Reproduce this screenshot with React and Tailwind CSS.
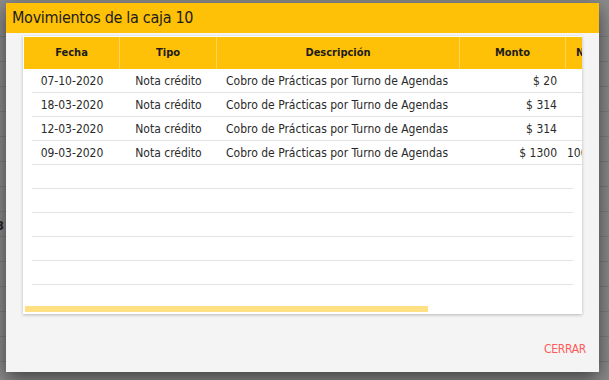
import React from 'react';

const ROWS = [
  { fecha: '07-10-2020', tipo: 'Nota crédito', desc: 'Cobro de Prácticas por Turno de Agendas', monto: '$ 20', nro: '' },
  { fecha: '18-03-2020', tipo: 'Nota crédito', desc: 'Cobro de Prácticas por Turno de Agendas', monto: '$ 314', nro: '' },
  { fecha: '12-03-2020', tipo: 'Nota crédito', desc: 'Cobro de Prácticas por Turno de Agendas', monto: '$ 314', nro: '' },
  { fecha: '09-03-2020', tipo: 'Nota crédito', desc: 'Cobro de Prácticas por Turno de Agendas', monto: '$ 1300', nro: '1000' },
];

const font = { fontFamily: '"DejaVu Sans Condensed", "DejaVu Sans", sans-serif' };

export default function App() {
  return (
    <div className="relative w-[609px] h-[380px] overflow-hidden bg-[#8b8b8b]" style={font}>
      {/* dimmed page behind the dialog */}
      <div className="absolute inset-0 flex flex-col pt-[12px]">
        {Array.from({ length: 15 }).map((_, i) => (
          <div key={i} className="h-[25px] shrink-0 border-b border-[#7d7d7d]" />
        ))}
      </div>
      <span className="absolute left-[-4px] top-[216px] text-[13px] font-bold text-[#2a2a2a]">3</span>

      {/* dialog */}
      <div className="absolute left-[6px] top-[3px] w-[593px] h-[369px] bg-[#f4f4f4] shadow-[0_6px_18px_rgba(0,0,0,0.55)] flex flex-col">
        <div className="h-[30px] shrink-0 bg-[#ffc107] flex items-center px-[6px] text-[16px] tracking-[-0.3px] text-[#1c1c1c]">
          Movimientos de la caja 10
        </div>

        <div className="px-[17px] pt-[3px]">
          <div className="relative h-[278px] bg-white shadow-[0_1px_3px_rgba(0,0,0,0.25)] overflow-hidden flex flex-col">
            {/* header */}
            <div className="mt-[1px] ml-[1px] h-[32px] shrink-0 flex bg-[#ffc107] text-[11px] font-bold text-[#1c1c1c]">
              <div className="w-[96px] shrink-0 flex items-center justify-center border-r border-[#ffd45a]">Fecha</div>
              <div className="w-[97px] shrink-0 flex items-center justify-center border-r border-[#ffd45a]">Tipo</div>
              <div className="w-[243px] shrink-0 flex items-center justify-center border-r border-[#ffd45a]">Descripción</div>
              <div className="w-[106px] shrink-0 flex items-center justify-center border-r border-[#ffd45a]">Monto</div>
              <div className="w-[100px] shrink-0 flex items-center pl-[10px] whitespace-nowrap">Nro. Comprobante</div>
            </div>

            {/* rows */}
            <div className="flex flex-col text-[12px] text-[#2a2a2a]">
              {ROWS.map((r) => (
                <div key={r.fecha} className="ml-[9px] h-[24px] flex items-center border-b-[1.5px] border-[#e2e2e2]">
                  <div className="w-[88px] shrink-0 pr-[8px] text-center">{r.fecha}</div>
                  <div className="w-[97px] shrink-0 text-center">{r.tipo}</div>
                  <div className="w-[243px] shrink-0 pl-[9px] whitespace-nowrap">{r.desc}</div>
                  <div className="w-[106px] shrink-0 pr-[9px] text-right">{r.monto}</div>
                  <div className="w-[60px] shrink-0 pl-[1px] whitespace-nowrap">{r.nro}</div>
                </div>
              ))}
              {Array.from({ length: 5 }).map((_, i) => (
                <div key={i} className="ml-[9px] mr-[9px] h-[24px] shrink-0 border-b-[1.5px] border-[#e2e2e2]" />
              ))}
            </div>

            {/* horizontal scrollbar */}
            <div className="mt-auto mb-[2px] ml-[2px] w-[403px] h-[6px] shrink-0 bg-[#ffe083]" />
          </div>
        </div>

        <div className="mt-auto flex justify-end pr-[13px] pb-[14px]">
          <button type="button" className="text-[12px] text-[#ff5a5a] tracking-tight">CERRAR</button>
        </div>
      </div>
    </div>
  );
}
